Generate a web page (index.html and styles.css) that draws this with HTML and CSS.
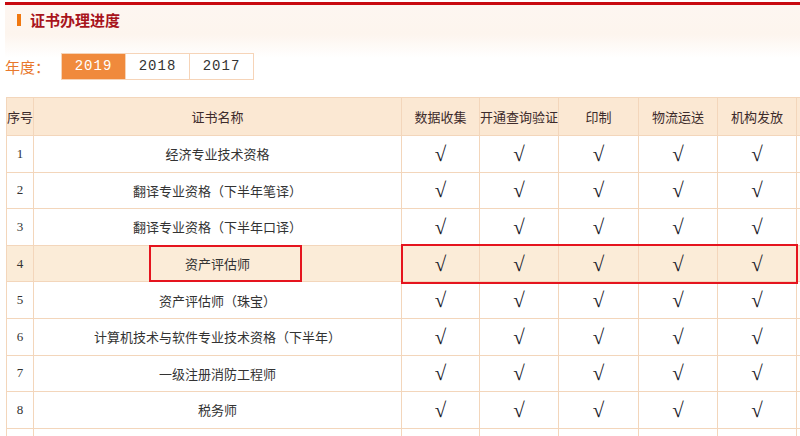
FILE: index.html
```html
<!DOCTYPE html>
<html lang="zh-CN">
<head>
<meta charset="utf-8">
<title>证书办理进度</title>
<link rel="stylesheet" href="styles.css">
</head>
<body>
<div class="page">
  <div class="head">
    <h2 class="title"><span class="bar"></span>证书办理进度</h2>
  </div>
  <div class="years">
    <span class="label">年度：</span>
    <div class="tabs">
      <span class="tab active">2019</span>
      <span class="tab">2018</span>
      <span class="tab">2017</span>
    </div>
  </div>
  <div class="tablewrap">
    <table class="grid">
      <colgroup>
        <col class="c-no"><col class="c-name"><col class="c-a"><col class="c-b"><col class="c-c"><col class="c-d"><col class="c-e"><col class="c-x">
      </colgroup>
      <thead>
        <tr><th>序号</th><th>证书名称</th><th>数据收集</th><th>开通查询验证</th><th>印制</th><th>物流运送</th><th>机构发放</th><th></th></tr>
      </thead>
      <tbody>
        <tr><td class="no">1</td><td>经济专业技术资格</td><td class="ck">√</td><td class="ck">√</td><td class="ck">√</td><td class="ck">√</td><td class="ck">√</td><td></td></tr>
        <tr><td class="no">2</td><td>翻译专业资格（下半年笔译）</td><td class="ck">√</td><td class="ck">√</td><td class="ck">√</td><td class="ck">√</td><td class="ck">√</td><td></td></tr>
        <tr><td class="no">3</td><td>翻译专业资格（下半年口译）</td><td class="ck">√</td><td class="ck">√</td><td class="ck">√</td><td class="ck">√</td><td class="ck">√</td><td></td></tr>
        <tr class="hl"><td class="no">4</td><td>资产评估师</td><td class="ck">√</td><td class="ck">√</td><td class="ck">√</td><td class="ck">√</td><td class="ck">√</td><td></td></tr>
        <tr><td class="no">5</td><td>资产评估师（珠宝）</td><td class="ck">√</td><td class="ck">√</td><td class="ck">√</td><td class="ck">√</td><td class="ck">√</td><td></td></tr>
        <tr><td class="no">6</td><td>计算机技术与软件专业技术资格（下半年）</td><td class="ck">√</td><td class="ck">√</td><td class="ck">√</td><td class="ck">√</td><td class="ck">√</td><td></td></tr>
        <tr><td class="no">7</td><td>一级注册消防工程师</td><td class="ck">√</td><td class="ck">√</td><td class="ck">√</td><td class="ck">√</td><td class="ck">√</td><td></td></tr>
        <tr><td class="no">8</td><td>税务师</td><td class="ck">√</td><td class="ck">√</td><td class="ck">√</td><td class="ck">√</td><td class="ck">√</td><td></td></tr>
        <tr><td></td><td></td><td></td><td></td><td></td><td></td><td></td><td></td></tr>
      </tbody>
    </table>
    <div class="mark mark-name"></div>
    <div class="mark mark-steps"></div>
  </div>
</div>
</body>
</html>
```
FILE: styles.css
```css
html, body {
  margin: 0;
  padding: 0;
  background: #fff;
}
body {
  width: 800px;
  height: 436px;
  overflow: hidden;
  font-family: "Noto Sans CJK SC", "Liberation Sans", sans-serif;
  color: #333;
}
.page {
  padding-top: 2px;
}
.head {
  margin-left: 5px;
  border-top: 3px solid #c80a10;
  height: 53px;
  background: linear-gradient(to bottom, #fdf6f1 0%, #fdf5ee 55%, #ffffff 100%);
}
.title {
  margin: 0;
  padding: 5px 0 0 12px;
  display: flex;
  align-items: center;
  height: 20px;
  font-size: 15px;
  line-height: 20px;
  font-weight: bold;
  color: #a8141c;
}
.bar {
  display: inline-block;
  width: 4px;
  height: 12px;
  background: #f07810;
  margin-right: 9px;
}
.years {
  display: flex;
  align-items: center;
  margin-top: -5px;
  padding-left: 5px;
  height: 27px;
}
.label {
  font-size: 15px;
  color: #e8782c;
  width: 56px;
  line-height: 27px;
}
.tabs {
  display: flex;
  border: 1px solid #f6d4b8;
}
.tab {
  width: 63px;
  height: 25px;
  line-height: 25px;
  text-align: center;
  font-family: "Liberation Mono", "DejaVu Sans Mono", monospace;
  font-size: 14px;
  letter-spacing: 1px;
  color: #333;
  background: #fff;
  border-left: 1px solid #f6d4b8;
}
.tab:first-child {
  border-left: none;
}
.tab.active {
  background: #f08a3c;
  color: #fff;
}
.tablewrap {
  position: relative;
  margin-top: 17px;
  margin-left: 6px;
}
.grid {
  border-collapse: collapse;
  table-layout: fixed;
  width: 870px;
  font-size: 13px;
}
.c-no { width: 27px; }
.c-name { width: 368px; }
.c-a { width: 78px; }
.c-b { width: 79px; }
.c-c { width: 80px; }
.c-d { width: 79px; }
.c-e { width: 79px; }
.c-x { width: 80px; }
.grid th,
.grid td {
  border: 1px solid #f3d6bb;
  text-align: center;
  padding: 0;
  white-space: nowrap;
  overflow: hidden;
}
.grid th {
  height: 37px;
  background: #fbe8d3;
  font-weight: normal;
  color: #3d2b2b;
}
.grid td {
  height: 35.6px;
}
.grid td.no {
  font-family: "Liberation Serif", serif;
  font-size: 13px;
  color: #333;
}
.grid td.ck {
  font-family: "Liberation Serif", serif;
  font-size: 21px;
  line-height: 20px;
  color: #1a1a2a;
}
.grid tr.hl td {
  background: #fbecd8;
}
.mark {
  position: absolute;
  border: 2px solid #e5141e;
  box-sizing: border-box;
}
.mark-name {
  left: 143px;
  top: 148px;
  width: 153px;
  height: 37px;
}
.mark-steps {
  left: 395px;
  top: 147px;
  width: 397px;
  height: 40px;
}
```
